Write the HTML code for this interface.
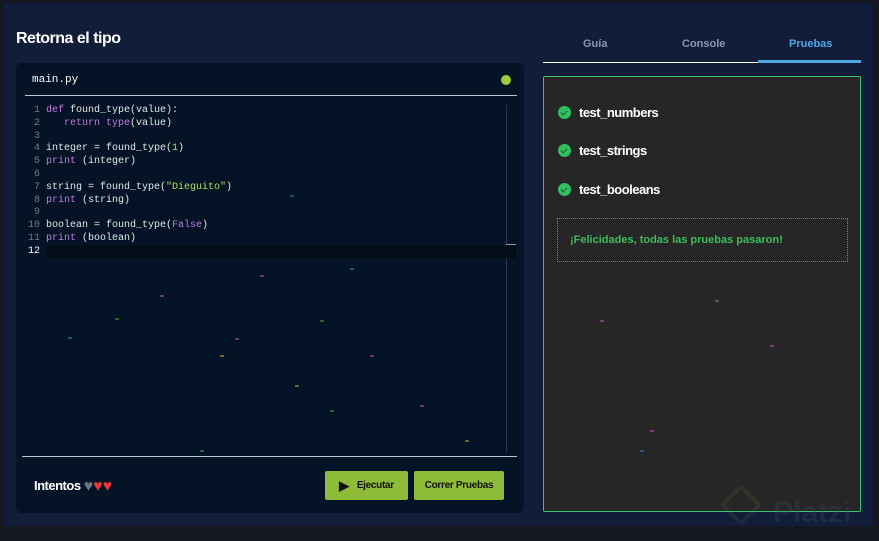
<!DOCTYPE html>
<html><head><meta charset="utf-8"><style>
*{margin:0;padding:0;box-sizing:border-box}
body{width:879px;height:541px;background:#151821;position:relative;overflow:hidden;font-family:"Liberation Sans",sans-serif}
.main{position:absolute;left:4px;top:3px;width:869px;height:523px;background:#121d3a}
h1{position:absolute;left:16px;top:30px;font-size:16px;color:#fff;font-weight:bold;letter-spacing:-0.5px}
.ed{position:absolute;left:16px;top:63px;width:508px;height:450px;background:#041426;border-radius:6px}
.fn{position:absolute;left:16px;top:11px;font:11px "Liberation Mono",monospace;color:#fff}
.dot{position:absolute;left:485px;top:12px;width:10px;height:10px;border-radius:50%;background:#9ccb3b}
.hl1{position:absolute;left:9px;top:32px;width:492px;height:1px;background:#b9c9cf}
.code{position:absolute;left:0;top:42px;font:10px/12.8px "Liberation Mono",monospace;color:#e6e6e6}
.ln{display:inline-block;width:24px;text-align:right;color:#777;margin-right:6px}
.k{color:#c678dd}.s{color:#a6e05a}.n{color:#a0e060}
.cur{position:absolute;left:30px;top:182px;width:470px;height:13px;background:#020d18}
.vs{position:absolute;left:490px;top:42px;width:1px;height:348px;background:#2a3848}
.vt{position:absolute;left:490px;top:181px;width:10px;height:1px;background:#8a9aa8}
.hl2{position:absolute;left:6px;top:393px;width:495px;height:1px;background:#b9c9cf}
.int{position:absolute;left:18px;top:415px;color:#fff;font-size:13px;font-weight:bold;letter-spacing:-0.5px}
.int b{font-size:16px;letter-spacing:0;vertical-align:-1px}
.btn{position:absolute;top:408px;height:29px;background:#8fbc38;border-radius:2px;color:#111;font-size:10px;font-weight:bold;display:flex;align-items:center;justify-content:center;letter-spacing:-0.3px}
.tabs{position:absolute;left:543px;top:38px;width:318px;font-size:11px;font-weight:bold;color:#8a98ad}
.tabs span{position:absolute;top:0}
.tl{position:absolute;left:543px;top:62px;width:318px;height:1px;background:#fff}
.ta{position:absolute;left:758px;top:60px;width:103px;height:3px;background:#4ea8e6}
.rp{position:absolute;left:543px;top:76px;width:318px;height:436px;background:#262626;border:1px solid #3ec274;border-radius:2px}
.t{position:absolute;left:14px;color:#fff;font-size:13px;font-weight:bold;letter-spacing:-0.5px;display:flex;align-items:center}
.ck{width:13px;height:13px;border-radius:50%;background:#2fbf5e;margin-right:8px;position:relative}
.ck:after{content:"";position:absolute;left:4px;top:3px;width:3px;height:5px;border:solid #1b5e2e;border-width:0 1.5px 1.5px 0;transform:rotate(45deg)}
.msg{position:absolute;left:13px;top:141px;width:291px;height:44px;border:1px dotted #3ea85e;color:#3cbc5e;font-size:11px;font-weight:bold;padding:15px 0 0 12px}
.c{position:absolute;width:4px;height:2px;opacity:.55}
</style></head><body>
<div class="main"></div>
<h1>Retorna el tipo</h1>
<div class="ed">
<div class="fn">main.py</div><div class="dot"></div><div class="hl1"></div>
<div class="vs"></div><div class="vt"></div>
<div class="cur"></div>
<div class="code">
<div><span class="ln">1</span><span class="k">def</span> found_type(value):</div>
<div><span class="ln">2</span><span class="k">&nbsp;&nbsp;&nbsp;return</span> <span class="k">type</span>(value)</div>
<div><span class="ln">3</span></div>
<div><span class="ln">4</span>integer = found_type(<span class="n">1</span>)</div>
<div><span class="ln">5</span><span class="k">print</span> (integer)</div>
<div><span class="ln">6</span></div>
<div><span class="ln">7</span>string = found_type(<span class="s">"Dieguito"</span>)</div>
<div><span class="ln">8</span><span class="k">print</span> (string)</div>
<div><span class="ln">9</span></div>
<div><span class="ln">10</span>boolean = found_type(<span class="k">False</span>)</div>
<div><span class="ln">11</span><span class="k">print</span> (boolean)</div>
<div><span class="ln" style="color:#fff">12</span></div>
</div>
<div class="hl2"></div>
<div class="int">Intentos <b style="color:#6b7280">♥</b><b style="color:#e53935">♥♥</b></div>
<div class="btn" style="left:309px;width:83px"><span style="font-size:13px;margin-right:8px">▶</span>Ejecutar</div>
<div class="btn" style="left:398px;width:90px">Correr Pruebas</div>
</div>
<div class="tabs"><span style="left:40px">Guía</span><span style="left:139px">Console</span><span style="left:246px;color:#4ea8e6">Pruebas</span></div>
<div class="tl"></div><div class="ta"></div>
<div class="rp">
<div class="t" style="top:28px"><div class="ck"></div>test_numbers</div>
<div class="t" style="top:66px"><div class="ck"></div>test_strings</div>
<div class="t" style="top:105px"><div class="ck"></div>test_booleans</div>
<div class="msg">¡Felicidades, todas las pruebas pasaron!</div>
</div>
<div class="c" style="left:290px;top:195px;background:#3a7bd5"></div>
<div class="c" style="left:160px;top:295px;background:#c050c0"></div>
<div class="c" style="left:115px;top:318px;background:#6a9a3a"></div>
<div class="c" style="left:260px;top:275px;background:#c050c0"></div>
<div class="c" style="left:320px;top:320px;background:#50a050"></div>
<div class="c" style="left:235px;top:338px;background:#c050c0"></div>
<div class="c" style="left:68px;top:337px;background:#2a8ab5"></div>
<div class="c" style="left:220px;top:355px;background:#d0a040"></div>
<div class="c" style="left:370px;top:355px;background:#c050c0"></div>
<div class="c" style="left:295px;top:385px;background:#d0a040"></div>
<div class="c" style="left:420px;top:405px;background:#c050c0"></div>
<div class="c" style="left:330px;top:410px;background:#50a050"></div>
<div class="c" style="left:200px;top:450px;background:#50a050"></div>
<div class="c" style="left:465px;top:440px;background:#d0a040"></div>
<div class="c" style="left:350px;top:268px;background:#3a7bd5"></div>
<div class="c" style="left:600px;top:320px;background:#c050c0"></div>
<div class="c" style="left:640px;top:450px;background:#3a7bd5"></div>
<div class="c" style="left:770px;top:345px;background:#c050c0"></div>
<div class="c" style="left:715px;top:300px;background:#50a050"></div>
<div class="c" style="left:650px;top:430px;background:#c050c0"></div>
<div style="position:absolute;left:726px;top:490px;width:30px;height:30px;border:4px solid rgba(120,150,60,.12);transform:rotate(45deg);border-radius:4px"></div>
<div style="position:absolute;left:773px;top:496px;color:rgba(60,80,110,.25);font-size:30px;font-weight:bold">Platzi</div>
</body></html>
